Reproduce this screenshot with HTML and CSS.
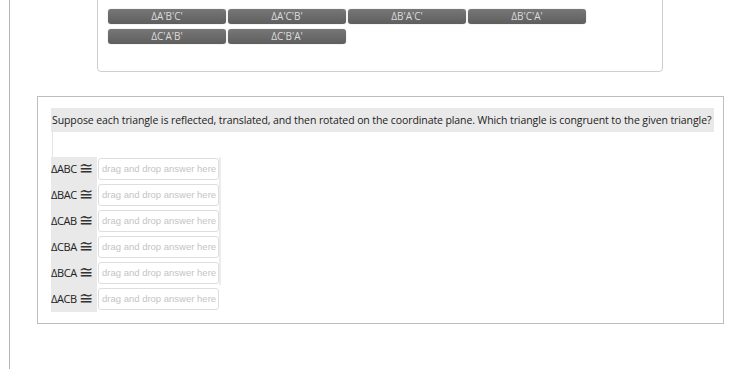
FILE: index.html
```html
<!DOCTYPE html>
<html lang="en">
<head>
    <meta charset="UTF-8">
    <meta name="viewport" content="width=device-width, initial-scale=1.0">
    <title>Triangle Congruence</title>
    <link rel="stylesheet" href="styles.css">
</head>
<body>
    <div class="page">
        <div class="bank">
            <div class="choices">
                <div class="choice">&Delta;A'B'C'</div>
                <div class="choice">&Delta;A'C'B'</div>
                <div class="choice">&Delta;B'A'C'</div>
                <div class="choice">&Delta;B'C'A'</div>
                <div class="choice">&Delta;C'A'B'</div>
                <div class="choice">&Delta;C'B'A'</div>
            </div>
        </div>

        <div class="question">
            <p class="prompt">Suppose each triangle is reflected, translated, and then rotated on the coordinate plane. Which triangle is congruent to the given triangle?</p>
            <div class="spacer"></div>
            <div class="answers">
                <div class="labels">
                    <div class="label">&Delta;ABC <span class="cong">&cong;</span></div>
                    <div class="label">&Delta;BAC <span class="cong">&cong;</span></div>
                    <div class="label">&Delta;CAB <span class="cong">&cong;</span></div>
                    <div class="label">&Delta;CBA <span class="cong">&cong;</span></div>
                    <div class="label">&Delta;BCA <span class="cong">&cong;</span></div>
                    <div class="label">&Delta;ACB <span class="cong">&cong;</span></div>
                </div>
                <div class="drops">
                    <div class="drop">drag and drop answer here</div>
                    <div class="drop">drag and drop answer here</div>
                    <div class="drop">drag and drop answer here</div>
                    <div class="drop">drag and drop answer here</div>
                    <div class="drop">drag and drop answer here</div>
                    <div class="drop">drag and drop answer here</div>
                </div>
                <div class="rail"></div>
            </div>
        </div>
    </div>
</body>
</html>
```

FILE: styles.css
```css
body {
    margin: 0;
    font-family: 'Open Sans', sans-serif;
    background-color: white;
    color: #222;
}
.page {
    margin-left: 9px;
    border-left: 1px solid #b5b5b5;
    height: 369px;
    overflow: hidden;
}
.bank {
    margin: -20px 0 0 87px;
    width: 566px;
    height: 92px;
    box-sizing: border-box;
    border: 1px solid #cfcfcf;
    border-radius: 4px;
    padding: 28px 0 0 10px;
}
.choices {
    display: grid;
    grid-template-columns: repeat(4, 118px);
    column-gap: 2px;
    row-gap: 5px;
}
.choice {
    height: 15px;
    line-height: 15px;
    text-align: center;
    font-size: 10px;
    color: #dcdcdc;
    background: linear-gradient(#777, #5e5e5e);
    border-radius: 3px;
    box-shadow: 0 0 1px #999;
}
.question {
    margin: 24px 0 0 27px;
    width: 687px;
    height: 228px;
    box-sizing: border-box;
    border: 1px solid #bdbdbd;
    padding: 11px 9px 0 13px;
}
.prompt {
    margin: 0;
    background-color: #e9e9e9;
    height: 24px;
    line-height: 24px;
    font-size: 10.5px;
    letter-spacing: -0.09px;
    padding-left: 1px;
    white-space: nowrap;
}
.spacer {
    height: 25px;
    border-left: 1px solid #e4e4e4;
    margin-left: 1px;
}
.answers {
    display: flex;
    align-items: flex-start;
}
.labels {
    width: 46px;
    background-color: #e9e9e9;
    display: flex;
    flex-direction: column;
    gap: 4px;
    padding: 1px 0 2px 0;
}
.label {
    height: 22px;
    line-height: 22px;
    font-size: 11px;
    letter-spacing: -0.4px;
    white-space: nowrap;
}
.cong {
    font-family: 'DejaVu Sans', sans-serif;
    font-weight: 200;
    font-size: 17px;
    line-height: 1;
    vertical-align: -1px;
    letter-spacing: 0;
    color: #333;
}
.drops {
    display: flex;
    flex-direction: column;
    gap: 4px;
    margin: 1px 0 0 1px;
}
.drop {
    width: 116px;
    height: 20px;
    line-height: 20px;
    border: 1px solid #dedede;
    border-radius: 3px;
    font-family: 'Liberation Sans', Arial, sans-serif;
    font-size: 9.5px;
    color: #c4c4c4;
    padding-left: 3px;
    white-space: nowrap;
}
.rail {
    width: 2px;
    height: 128px;
    background-color: #ececec;
}
```
